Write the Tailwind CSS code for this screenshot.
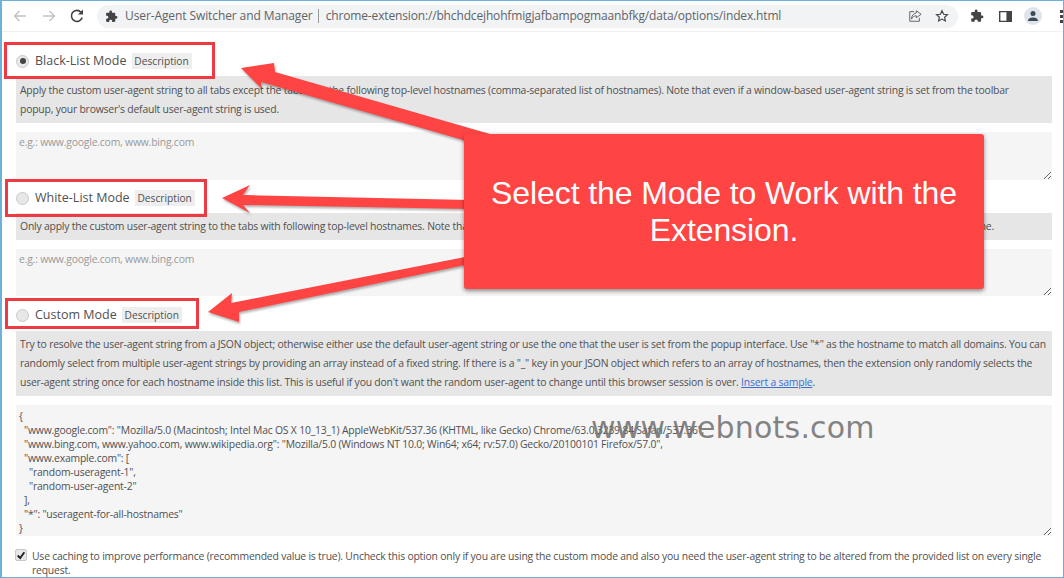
<!DOCTYPE html>
<html>
  <head>
    <meta charset="UTF-8" />
    <script src="https://cdn.jsdelivr.net/npm/@tailwindcss/browser@4"></script>
  </head>
  <body class="bg-white">
    <div class="relative w-[1064px] h-[578px] overflow-hidden border border-[#6fb0d8] border-l-2 font-['Open_Sans',sans-serif] text-[#505050]">
      <!-- browser toolbar -->
      <div class="flex items-center h-[31px] pl-[10px] border-b border-[#f0f0f0] text-[#5f6368]">
        <svg class="w-[16px] h-[16px] text-[#c0c4c8]" viewBox="0 0 16 16" fill="none" stroke="currentColor" stroke-width="1.4"><path d="M14 8H2.500M7.500 3 2.500 8l5 5" /></svg>
        <svg class="w-[16px] h-[16px] ml-[13px] text-[#c0c4c8]" viewBox="0 0 16 16" fill="none" stroke="currentColor" stroke-width="1.4"><path d="M2 8h11.500M8.500 3l5 5-5 5" /></svg>
        <svg class="w-[16px] h-[16px] ml-[12px] text-[#444]" viewBox="0 0 16 16" fill="none" stroke="currentColor" stroke-width="1.600"><path d="M13.200 9.500A5.500 5.500 0 1 1 12 4.200" /><path d="M14 1.500v5H9z" fill="currentColor" stroke="none" /></svg>
        <div class="flex items-center ml-[12px] w-[861px] h-[23px] rounded-full bg-[#f1f3f4] pl-[8px] pr-[9px]">
          <svg class="w-[13px] h-[13px] text-[#444]" viewBox="0 0 24 24" fill="currentColor"><path d="M20.500 11H19V7c0-1.100-.9-2-2-2h-4V3.500a2.500 2.500 0 0 0-5 0V5H4c-1.100 0-2 .9-2 2v3.800h1.500a2.700 2.700 0 0 1 0 5.400H2V20c0 1.100.9 2 2 2h3.800v-1.500a2.700 2.700 0 0 1 5.400 0V22H17c1.100 0 2-.9 2-2v-4h1.500a2.500 2.500 0 0 0 0-5z" /></svg>
          <span class="ml-[7px] text-[12px] whitespace-nowrap tracking-[-0.1px]">User-Agent Switcher and Manager</span>
          <span class="ml-[5px] w-px h-[14px] bg-[#999]"></span>
          <span class="ml-[7px] text-[12px] whitespace-nowrap tracking-[-0.15px]">chrome-extension://bhchdcejhohfmigjafbampogmaanbfkg/data/options/index.html</span>
          <svg class="ml-auto w-[14px] h-[14px]" viewBox="0 0 16 16" fill="none" stroke="currentColor" stroke-width="1.100"><path d="M7 3H2v11h11v-4" /><path d="M9.500 2 15 6l-5.500 4V7.800C7 7.800 5 9 4 11.500 4 8 6 5 9.500 4.500z" /></svg>
          <svg class="ml-[13px] w-[14px] h-[14px] text-[#444]" viewBox="0 0 24 24" fill="none" stroke="currentColor" stroke-width="2"><path d="m12 3 2.800 6 6.500.7-4.800 4.400 1.300 6.400L12 17.300 6.200 20.500l1.300-6.400-4.800-4.400 6.500-.7z" /></svg>
        </div>
        <svg class="ml-[12px] w-[14px] h-[14px] text-[#444]" viewBox="0 0 24 24" fill="currentColor"><path d="M20.500 11H19V7c0-1.100-.9-2-2-2h-4V3.500a2.500 2.500 0 0 0-5 0V5H4c-1.100 0-2 .9-2 2v3.800h1.500a2.700 2.700 0 0 1 0 5.400H2V20c0 1.100.9 2 2 2h3.800v-1.500a2.700 2.700 0 0 1 5.400 0V22H17c1.100 0 2-.9 2-2v-4h1.500a2.500 2.500 0 0 0 0-5z" /></svg>
        <svg class="ml-[15px] w-[13px] h-[13px] text-[#444]" viewBox="0 0 14 14"><path fill-rule="evenodd" fill="currentColor" d="M0 1h14v12H0zM1.500 2.500v9h6.500v-9z" /></svg>
        <span class="flex items-center justify-center shrink-0 ml-[12px] w-[18px] h-[18px] rounded-full bg-[#dfe3ea]">
          <svg class="w-[12px] h-[12px] text-[#3c4a5c]" viewBox="0 0 12 12" fill="currentColor"><circle cx="6" cy="3.500" r="2.500" /><path d="M1 11c0-2.500 2.500-3.500 5-3.500s5 1 5 3.500z" /></svg>
        </span>
        <span class="flex flex-col shrink-0 gap-[2px] ml-[18px]"><i class="w-[3px] h-[3px] bg-[#444]"></i><i class="w-[3px] h-[3px] bg-[#444]"></i><i class="w-[3px] h-[3px] bg-[#444]"></i></span>
      </div>

      <!-- options page -->
      <div class="pl-[14px] w-[1050px] tracking-[-0.2px]">
        <div class="flex items-center h-[44px] pt-[14px] tracking-normal">
          <span class="flex items-center justify-center w-[13px] h-[13px] rounded-full bg-[#e8e8e8] border border-[#c8c8c8]"><span class="w-[6px] h-[6px] rounded-full bg-[#444]"></span></span>
          <span class="ml-[6px] text-[12.500px]">Black-List Mode</span>
          <span class="ml-[5px] w-[60px] h-[16px] leading-[16px] text-center text-[10.200px] bg-[#eeeeee]">Description</span>
        </div>
        <p class="h-[47px] bg-[#e6e6e6] px-[4px] py-[5px] text-[10.400px] leading-[19px] whitespace-nowrap">Apply the custom user-agent string to all tabs except the tabs with the following top-level hostnames (comma-separated list of hostnames). Note that even if a window-based user-agent string is set from the toolbar<br />popup, your browser's default user-agent string is used.</p>
        <textarea class="block mt-[9px] w-full h-[48px] bg-[#f5f5f5] px-[3px] py-[3px] text-[10.400px] leading-[14px] outline-none placeholder:text-[#999]" placeholder="e.g.: www.google.com, www.bing.com"></textarea>

        <div class="flex items-center h-[33px] pt-[3px] tracking-normal">
          <span class="w-[13px] h-[13px] rounded-full bg-[#e8e8e8] border border-[#c8c8c8]"></span>
          <span class="ml-[6px] text-[12.500px]">White-List Mode</span>
          <span class="ml-[5px] w-[60px] h-[16px] leading-[16px] text-center text-[10.200px] bg-[#eeeeee]">Description</span>
        </div>
        <p class="h-[27px] bg-[#e6e6e6] px-[4px] py-[4px] text-[10.400px] leading-[19px] whitespace-nowrap">Only apply the custom user-agent string to the tabs with following top-level hostnames. Note that if a window-based user-agent string is set from the toolbar popup, this user-agent string replaces the global one.</p>
        <textarea class="block mt-[9px] w-full h-[47px] bg-[#f5f5f5] px-[3px] py-[3px] text-[10.400px] leading-[14px] outline-none placeholder:text-[#999]" placeholder="e.g.: www.google.com, www.bing.com"></textarea>

        <div class="flex items-center h-[35px] pt-[3px] tracking-normal">
          <span class="w-[13px] h-[13px] rounded-full bg-[#e8e8e8] border border-[#c8c8c8]"></span>
          <span class="ml-[6px] text-[12.500px]">Custom Mode</span>
          <span class="ml-[5px] w-[60px] h-[16px] leading-[16px] text-center text-[10.200px] bg-[#eeeeee]">Description</span>
        </div>
        <p class="h-[65px] bg-[#e6e6e6] px-[4px] py-[4px] text-[10.400px] leading-[19px] whitespace-nowrap">Try to resolve the user-agent string from a JSON object; otherwise either use the default user-agent string or use the one that the user is set from the popup interface. Use "*" as the hostname to match all domains. You can<br />randomly select from multiple user-agent strings by providing an array instead of a fixed string. If there is a "_" key in your JSON object which refers to an array of hostnames, then the extension only randomly selects the<br />user-agent string once for each hostname inside this list. This is useful if you don't want the random user-agent to change until this browser session is over. <a class="text-[#3b6fd4] underline">Insert a sample</a>.</p>
        <textarea class="block mt-[9px] w-full h-[131px] bg-[#f5f5f5] px-[3px] py-[4px] text-[10.400px] leading-[14px] outline-none whitespace-pre overflow-hidden">{
  "www.google.com": "Mozilla/5.0 (Macintosh; Intel Mac OS X 10_13_1) AppleWebKit/537.36 (KHTML, like Gecko) Chrome/63.0.3239.84 Safari/537.36",
  "www.bing.com, www.yahoo.com, www.wikipedia.org": "Mozilla/5.0 (Windows NT 10.0; Win64; x64; rv:57.0) Gecko/20100101 Firefox/57.0",
  "www.example.com": [
    "random-useragent-1",
    "random-user-agent-2"
  ],
  "*": "useragent-for-all-hostnames"
}</textarea>
        <div class="flex mt-[13px]">
          <span class="flex items-center justify-center shrink-0 w-[12px] h-[12px] ml-[-1px] rounded-[2px] bg-[#e8e8e8] border border-[#c8c8c8]">
            <svg class="w-[11px] h-[11px]" viewBox="0 0 12 12" fill="none" stroke="#222" stroke-width="2.200"><path d="m2 6 3 3 5-7" /></svg>
          </span>
          <p class="ml-[5px] text-[10.400px] leading-[14px] whitespace-nowrap">Use caching to improve performance (recommended value is true). Uncheck this option only if you are using the custom mode and also you need the user-agent string to be altered from the provided list on every single<br />request.</p>
        </div>
      </div>

      <!-- annotations over the page -->
      <div class="absolute left-[2px] top-[41px] w-[211px] h-[37px] border-[3px] border-[#ee3b43]"></div>
      <div class="absolute left-[3px] top-[178px] w-[202px] h-[38px] border-[3px] border-[#ee3b43]"></div>
      <div class="absolute left-[3px] top-[297px] w-[194px] h-[31px] border-[3px] border-[#ee3b43]"></div>
      <svg class="absolute left-[-2px] top-[-1px]" width="1064" height="578" viewBox="0 0 1064 578">
        <g fill="#ff4444" style="filter: drop-shadow(1px 2px 1px rgba(0,0,0,.3))">
          <path d="M241 68 274 63 275 72 490 134 470 142 261 82 261 88z" />
          <path d="M222 198 250 185 243 195 470 200 470 209 243 205 250 213z" />
          <path d="M208 312 232 293 231 303 470 256 470 264 239 312 239 322z" />
        </g>
      </svg>
      <div class="absolute left-[462px] top-[133px] flex items-center justify-center w-[520px] h-[155px] rounded-[3px] bg-[#ff4444] shadow-[0_2px_4px_rgba(0,0,0,0.45)] text-center text-white text-[32px] leading-[37px] tracking-[-0.1px] font-['Liberation_Sans',sans-serif]">
        <p>Select the Mode to Work with the<br />Extension.</p>
      </div>
      <div class="absolute left-[589px] top-[409px] text-[30px] leading-[36px] tracking-[0.2px] text-[#6e6e6e]/85 font-['DejaVu_Sans',sans-serif]">www.webnots.com</div>
    </div>
  </body>
</html>
